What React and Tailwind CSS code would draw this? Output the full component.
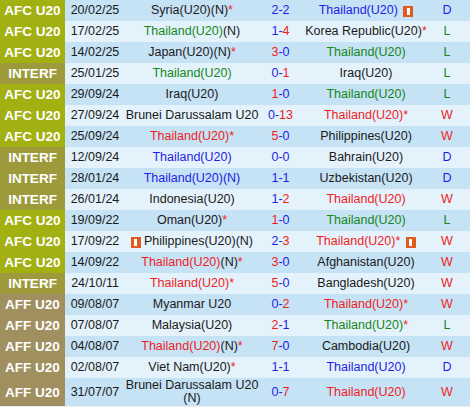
import React from 'react';

const LEAGUE_BG = {
  'AFC U20': 'bg-[#a2b012]',
  INTERF: 'bg-[#9c9a3a]',
  'AFF U20': 'bg-[#a08f5f]',
};

const Blue = ({ children }) => <span className="text-[#1e1ee6]">{children}</span>;
const Red = ({ children }) => <span className="text-[#f01c1c]">{children}</span>;
const Green = ({ children }) => <span className="text-[#15871a]">{children}</span>;
const Star = () => <span className="text-[#f01c1c]">*</span>;

const Flag = ({ className = '' }) => (
  <span className={`inline-flex shrink-0 items-center justify-center w-[10px] h-[11px] bg-[#e25a1c] align-[-1px] ${className}`}>
    <span className="w-[3px] h-[7px] bg-white" />
  </span>
);

const TH = {
  W: (extra) => <><Red>Thailand(U20)</Red>{extra}</>,
  D: (extra) => <><Blue>Thailand(U20)</Blue>{extra}</>,
  L: (extra) => <><Green>Thailand(U20)</Green>{extra}</>,
};

const Score = ({ h, a }) => {
  if (h === a) return <Blue>{h}-{a}</Blue>;
  if (h > a) return <><Red>{h}</Red><Blue>-{a}</Blue></>;
  return <><Blue>{h}-</Blue><Red>{a}</Red></>;
};

const rows = [
  { lg: 'AFC U20', date: '20/02/25', home: <>Syria(U20)(N)<Star /></>, h: 2, a: 2, away: <>{TH.D()} <Flag className="ml-[2px]" /></>, r: 'D' },
  { lg: 'AFC U20', date: '17/02/25', home: <>{TH.L('(N)')}</>, h: 1, a: 4, away: <>Korea Republic(U20)<Star /></>, r: 'L' },
  { lg: 'AFC U20', date: '14/02/25', home: <>Japan(U20)(N)<Star /></>, h: 3, a: 0, away: TH.L(), r: 'L' },
  { lg: 'INTERF', date: '25/01/25', home: TH.L(), h: 0, a: 1, away: 'Iraq(U20)', r: 'L' },
  { lg: 'AFC U20', date: '29/09/24', home: 'Iraq(U20)', h: 1, a: 0, away: TH.L(), r: 'L' },
  { lg: 'AFC U20', date: '27/09/24', home: 'Brunei Darussalam U20', h: 0, a: 13, away: <Red>Thailand(U20)*</Red>, r: 'W' },
  { lg: 'AFC U20', date: '25/09/24', home: <Red>Thailand(U20)*</Red>, h: 5, a: 0, away: 'Philippines(U20)', r: 'W' },
  { lg: 'INTERF', date: '12/09/24', home: TH.D(), h: 0, a: 0, away: 'Bahrain(U20)', r: 'D' },
  { lg: 'INTERF', date: '28/01/24', home: <Blue>Thailand(U20)(N)</Blue>, h: 1, a: 1, away: 'Uzbekistan(U20)', r: 'D' },
  { lg: 'INTERF', date: '26/01/24', home: 'Indonesia(U20)', h: 1, a: 2, away: TH.W(), r: 'W' },
  { lg: 'AFC U20', date: '19/09/22', home: <>Oman(U20)<Star /></>, h: 1, a: 0, away: TH.L(), r: 'L' },
  { lg: 'AFC U20', date: '17/09/22', home: <><Flag className="mr-[3px]" />Philippines(U20)(N)</>, h: 2, a: 3, away: <><Red>Thailand(U20)*</Red> <Flag className="ml-[2px]" /></>, r: 'W' },
  { lg: 'AFC U20', date: '14/09/22', home: <>{TH.W('(N)')}<Star /></>, h: 3, a: 0, away: 'Afghanistan(U20)', r: 'W' },
  { lg: 'INTERF', date: '24/10/11', home: <Red>Thailand(U20)*</Red>, h: 5, a: 0, away: 'Bangladesh(U20)', r: 'W' },
  { lg: 'AFF U20', date: '09/08/07', home: 'Myanmar U20', h: 0, a: 2, away: <Red>Thailand(U20)*</Red>, r: 'W' },
  { lg: 'AFF U20', date: '07/08/07', home: 'Malaysia(U20)', h: 2, a: 1, away: <>{TH.L()}<Star /></>, r: 'L' },
  { lg: 'AFF U20', date: '04/08/07', home: <>{TH.W('(N)')}<Star /></>, h: 7, a: 0, away: 'Cambodia(U20)', r: 'W' },
  { lg: 'AFF U20', date: '02/08/07', home: <>Viet Nam(U20)<Star /></>, h: 1, a: 1, away: TH.D(), r: 'D' },
  { lg: 'AFF U20', date: '31/07/07', home: 'Brunei Darussalam U20 (N)', h: 0, a: 7, away: TH.W(), r: 'W' },
];

const RESULT = { W: Red, D: Blue, L: Green };

export default function App() {
  return (
    <div className="w-[470px] h-[407px] bg-[#e9ecec] overflow-hidden font-['Liberation_Sans',Arial,sans-serif] text-[12.5px] text-[#1a1a1a]">
      {rows.map((row, i) => {
        const Res = RESULT[row.r];
        return (
          <div
            key={i}
            className={`grid grid-cols-[65px_60px_134px_43px_128px_40px] min-h-[21px] leading-[13px] ${
              i % 2 === 0 ? 'bg-[#c6e2f5]' : 'bg-[#e4f2fb]'
            }`}
          >
            <div className={`flex items-center justify-center font-bold text-white text-[13.5px] ${LEAGUE_BG[row.lg]}`}>
              {row.lg}
            </div>
            <div className="flex items-center justify-center">{row.date}</div>
            <div className="flex items-center justify-center text-center py-px">
              <span>{row.home}</span>
            </div>
            <div className="flex items-center justify-center">
              <Score h={row.h} a={row.a} />
            </div>
            <div className="flex items-center justify-center text-center">
              <span>{row.away}</span>
            </div>
            <div className="flex items-center justify-center pr-[6px]">
              <Res>{row.r}</Res>
            </div>
          </div>
        );
      })}
    </div>
  );
}
